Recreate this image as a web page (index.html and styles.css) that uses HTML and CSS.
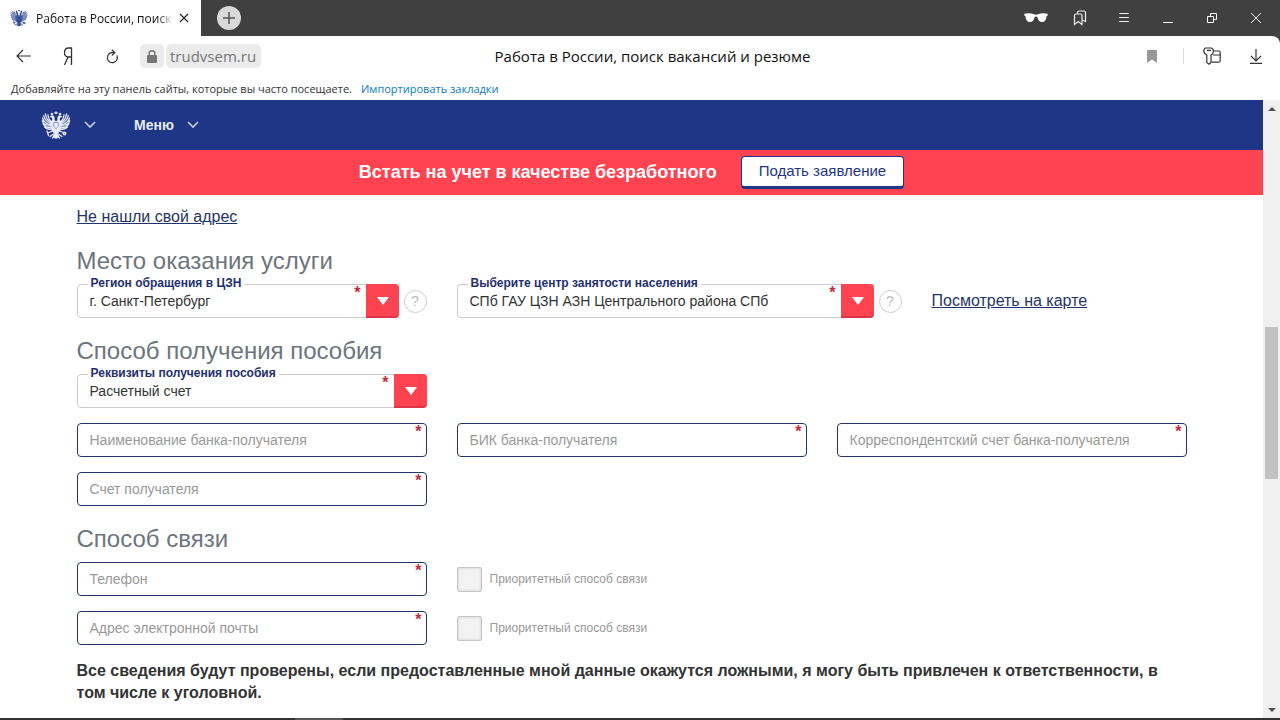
FILE: index.html
```html
<!DOCTYPE html>
<html lang="ru">
<head>
  <meta charset="UTF-8" />
  <meta name="viewport" content="width=device-width, initial-scale=1" />
  <title>Работа в России, поиск вакансий и резюме</title>
  <link rel="stylesheet" href="styles.css">
</head>
<body>
  <!-- Eagle emblem, used in the tab and in the site header -->
  <svg class="sprite" aria-hidden="true">
    <symbol id="eagle" viewBox="0 0 30 30">
      <g fill="currentColor">
        <path d="M15 1l.7.9.9.2-.4 1.600h-2.400l-.4-1.600.9-.2z"/>
        <path d="M9.600 3.600l1.400-.9 1.400.9-.3 1.400H9.900zM17.600 3.600l1.400-.9 1.400.9-.3 1.400h-2.200z"/>
        <path d="M8.500 7l1.700-1.600 2.200.2 1.200 1.600v3l1.400 1 1.400-1v-3l1.200-1.600 2.200-.2L21.500 7l-2.200.5-.6 1.700.8 2.200v9l-2.300 2.600L15 24.500l-2.200-1.500-2.300-2.600v-9l.8-2.200-.6-1.700z"/>
        <path d="M14 22h2l2.200 4.800L15 29l-3.200-2.200z"/>
      </g>
      <g fill="none" stroke="currentColor" stroke-width="1.300" stroke-linecap="round">
        <path d="M10.600 11.500Q7.500 10 7 5M10.500 12.500Q5.500 11 4.500 4M10.500 13.500Q4 12 2.800 5.500M10.500 14.800Q3 14 1.500 8M10.500 16.200Q3 16 1.300 10.800M10.500 17.600Q4.500 18.200 2 13.800M10.500 19Q6 20 3.500 17"/>
        <path d="M19.400 11.500Q22.500 10 23 5M19.500 12.500Q24.500 11 25.500 4M19.500 13.500Q26 12 27.200 5.500M19.500 14.800Q27 14 28.500 8M19.500 16.200Q27 16 28.700 10.800M19.500 17.600Q25.500 18.200 28 13.800M19.500 19Q24 20 26.500 17"/>
        <path d="M11.500 21l-5 2M6 21l1.500 4.500M18.500 21l5 2M9 26.500l3.500-2.500M21 26.500L17.500 24M11.500 28l1.500-2M18.500 28L17 26"/>
        <circle cx="23.500" cy="23.500" r="1.300"/>
      </g>
      <path class="eagle-shield" d="M12.800 12.500h4.400v4L15 19l-2.200-2.500zM8 13.500l-3-3M9 16.500l-4-1.500M22 13.500l3-3M21 16.500l4-1.500" fill="none" stroke-width=".7"/>
    </symbol>
    <symbol id="chevron" viewBox="0 0 12 8">
      <path d="M1 1l5 5 5-5" fill="none" stroke="currentColor" stroke-width="1.600"/>
    </symbol>
  </svg>

  <div class="titlebar">
    <div class="tab">
      <svg class="tab-icon" width="18" height="18"><use href="#eagle"/></svg>
      <span class="tab-title">Работа в России, поиск</span>
      <button class="tab-close" aria-label="Закрыть вкладку">
        <svg width="10" height="10" viewBox="0 0 10 10"><path d="M1 1l8 8M9 1L1 9" stroke="#222" stroke-width="1.200"/></svg>
      </button>
    </div>
    <button class="new-tab" aria-label="Новая вкладка">
      <svg width="14" height="14" viewBox="0 0 14 14"><path d="M7 1v12M1 7h12" stroke="#555" stroke-width="1.500"/></svg>
    </button>
    <div class="window-buttons">
      <button class="icon-btn" aria-label="Инкогнито">
        <svg width="24" height="10" viewBox="0 0 24 10"><path d="M.3.800Q6-.3 10 1.300q2 .7 4 0Q18-.3 23.700.8v1.800l-1.200.6q-.3 5.800-4.500 5.800-3.700 0-4.600-5-1.400-1-2.800 0-.9 5-4.600 5-4.200 0-4.500-5.800L.3 2.600z" fill="#fff"/></svg>
      </button>
      <button class="icon-btn" aria-label="Закладки">
        <svg width="14" height="16" viewBox="0 0 14 16" fill="none" stroke="#eee" stroke-width="1.200"><path d="M1.500 14.500V5.500q0-1.500 1.500-1.500h4.500q1.500 0 1.500 1.500v9l-3.800-3z"/><path d="M4.500 3.500V2.500q0-1.500 1.500-1.500h5q1.500 0 1.500 1.500v9l-3-1.500"/></svg>
      </button>
      <button class="icon-btn" aria-label="Меню браузера">
        <svg width="10" height="10" viewBox="0 0 10 10"><path d="M0 .5h10M0 4.500h10M0 8.500h10" stroke="#eee"/></svg>
      </button>
      <button class="icon-btn" aria-label="Свернуть">
        <svg width="10" height="10" viewBox="0 0 10 10"><path d="M0 9.500h10" stroke="#fff"/></svg>
      </button>
      <button class="icon-btn" aria-label="Свернуть в окно">
        <svg width="10" height="10" viewBox="0 0 10 10" fill="none" stroke="#fff"><path d="M.5 3.500h6v6h-6z"/><path d="M3.500 3.500v-3h6v6h-3"/></svg>
      </button>
      <button class="icon-btn" aria-label="Закрыть">
        <svg width="10" height="10" viewBox="0 0 10 10"><path d="M0 0l10 10M10 0L0 10" stroke="#fff"/></svg>
      </button>
    </div>
  </div>

  <div class="browser-bars">
    <div class="toolbar">
      <button class="icon-btn" aria-label="Назад">
        <svg width="16" height="14" viewBox="0 0 16 14" fill="none" stroke="#333" stroke-width="1.200"><path d="M15 7H1.500M7 1L1 7l6 6"/></svg>
      </button>
      <button class="icon-btn" aria-label="Яндекс">
        <svg width="10" height="18" viewBox="0 0 10 18" fill="none" stroke="#333" stroke-width="1.300"><path d="M8.500 18V1H5.500Q1.500 1 1.500 5.500T5.500 10h3M5 10L1.500 18"/></svg>
      </button>
      <button class="icon-btn" aria-label="Обновить">
        <svg width="14" height="15" viewBox="0 0 14 15" fill="none" stroke="#333" stroke-width="1.200"><path d="M11.800 6.500A5 5 0 1 1 7 3.700H9.800M6.800.8L9.800 3.700 6.800 6.700"/></svg>
      </button>
      <div class="address">
        <span class="lock">
          <svg width="10" height="13" viewBox="0 0 10 13"><rect y="5" width="10" height="8" rx="1" fill="#777"/><path d="M2.200 6V3.500a2.800 2.800 0 0 1 5.600 0V6" fill="none" stroke="#777" stroke-width="1.400"/></svg>
        </span>
        <span class="domain">trudvsem.ru</span>
      </div>
      <div class="page-title">Работа в России, поиск вакансий и резюме</div>
      <button class="icon-btn" aria-label="Добавить в закладки">
        <svg width="10" height="13" viewBox="0 0 10 13"><path d="M0 0h10v13L5 9.500 0 13z" fill="#999"/></svg>
      </button>
      <span class="divider"></span>
      <button class="icon-btn" aria-label="Пароли">
        <svg width="18" height="18" viewBox="0 0 18 18" fill="none" stroke="#333" stroke-width="1.200"><path d="M2.500 1h6q2 1 2 3.500Q10.200 7 8 8v7.500L6 17.200 3.800 15.500V8Q1 7 .8 4 .8 1.800 2.500 1zM4 3.300h4"/><path d="M10.500 4h5q1.700 0 1.700 1.700v8q0 1.500-1.700 1.500H8.500M10 8h7"/></svg>
      </button>
      <button class="icon-btn" aria-label="Загрузки">
        <svg width="12" height="15" viewBox="0 0 12 15" fill="none" stroke="#333" stroke-width="1.200"><path d="M6 0v12M1 7l5 5 5-5M0 14.400h12"/></svg>
      </button>
    </div>
    <div class="bookmarks">
      <span>Добавляйте на эту панель сайты, которые вы часто посещаете.</span>
      <a href="#">Импортировать закладки</a>
    </div>
  </div>

  <div class="viewport">
    <div class="site">
      <header class="site-header">
        <button class="header-btn" aria-label="Портал">
          <svg width="30" height="30"><use href="#eagle"/></svg>
          <svg class="chevron" width="12" height="8"><use href="#chevron"/></svg>
        </button>
        <button class="header-btn">
          Меню
          <svg class="chevron" width="12" height="8"><use href="#chevron"/></svg>
        </button>
      </header>

      <div class="banner">
        <strong>Встать на учет в качестве безработного</strong>
        <button class="banner-btn">Подать заявление</button>
      </div>

      <form class="form">
        <a class="link top-link" href="#">Не нашли свой адрес</a>

        <h2>Место оказания услуги</h2>
        <div class="row">
          <div class="col-4 with-help">
            <div class="field select">
              <label for="region">Регион обращения в ЦЗН</label>
              <select id="region"><option>г. Санкт-Петербург</option></select>
              <span class="required">*</span>
            </div>
            <button type="button" class="help" aria-label="Подсказка">?</button>
          </div>
          <div class="col-5 with-help">
            <div class="field select">
              <label for="center">Выберите центр занятости населения</label>
              <select id="center"><option>СПб ГАУ ЦЗН АЗН Центрального района СПб</option></select>
              <span class="required">*</span>
            </div>
            <button type="button" class="help" aria-label="Подсказка">?</button>
          </div>
          <div class="col-3">
            <a class="link" href="#">Посмотреть на карте</a>
          </div>
        </div>

        <h2>Способ получения пособия</h2>
        <div class="row">
          <div class="col-4 field select">
            <label for="payment">Реквизиты получения пособия</label>
            <select id="payment"><option>Расчетный счет</option></select>
            <span class="required">*</span>
          </div>
        </div>
        <div class="row">
          <div class="col-4 field">
            <input type="text" aria-label="Наименование банка-получателя" placeholder="Наименование банка-получателя">
            <span class="required">*</span>
          </div>
          <div class="col-4 field">
            <input type="text" aria-label="БИК банка-получателя" placeholder="БИК банка-получателя">
            <span class="required">*</span>
          </div>
          <div class="col-4 field">
            <input type="text" aria-label="Корреспондентский счет банка-получателя" placeholder="Корреспондентский счет банка-получателя">
            <span class="required">*</span>
          </div>
        </div>
        <div class="row">
          <div class="col-4 field">
            <input type="text" aria-label="Счет получателя" placeholder="Счет получателя">
            <span class="required">*</span>
          </div>
        </div>

        <h2>Способ связи</h2>
        <div class="row">
          <div class="col-4 field">
            <input type="tel" aria-label="Телефон" placeholder="Телефон">
            <span class="required">*</span>
          </div>
          <label class="col-4 check">
            <input type="checkbox">
            Приоритетный способ связи
          </label>
        </div>
        <div class="row">
          <div class="col-4 field">
            <input type="email" aria-label="Адрес электронной почты" placeholder="Адрес электронной почты">
            <span class="required">*</span>
          </div>
          <label class="col-4 check">
            <input type="checkbox">
            Приоритетный способ связи
          </label>
        </div>

        <p class="notice">Все сведения будут проверены, если предоставленные мной данные окажутся ложными, я могу быть привлечен к ответственности, в том числе к уголовной.</p>
      </form>
    </div>

    <div class="scrollbar">
      <button class="scroll-arrow up" aria-label="Вверх"></button>
      <div class="track"><div class="thumb"></div></div>
      <button class="scroll-arrow down" aria-label="Вниз"></button>
    </div>
  </div>

  <div class="taskbar"><span></span></div>
</body>
</html>
```
FILE: styles.css
```css
*,
*::before,
*::after {
  box-sizing: border-box;
}

body {
  margin: 0;
  min-height: 100vh;
  display: flex;
  flex-direction: column;
  background: #fff;
  color: #333;
  font-family: "Liberation Sans", Arial, sans-serif;
  font-size: 16px;
}

button {
  margin: 0;
  padding: 0;
  border: none;
  background: none;
  font: inherit;
  cursor: pointer;
}

svg {
  display: block;
  flex: none;
}

.sprite {
  position: absolute;
  width: 0;
  height: 0;
}

/* Browser window */
.titlebar {
  display: flex;
  align-items: center;
  height: 36px;
  background: #404040;
}

.tab,
.toolbar,
.bookmarks {
  font-family: "Open Sans", "Noto Sans", sans-serif;
}

.tab {
  display: flex;
  align-items: center;
  width: 201px;
  height: 36px;
  padding: 0 12px 0 10px;
  background: #fff;
  color: #111;
  font-size: 12px;
}

.tab-icon {
  margin-right: 8px;
  color: #2c468f;
}

.tab-title {
  flex: 1;
  white-space: nowrap;
  mask-image: linear-gradient(to right, #000 88%, transparent);
}

.tab-close {
  margin-left: 5px;
}

.new-tab {
  display: flex;
  align-items: center;
  justify-content: center;
  width: 24px;
  height: 24px;
  margin-left: 16px;
  border-radius: 50%;
  background: #d9d9d9;
}

.window-buttons {
  display: flex;
  margin-left: auto;
  padding-right: 2px;
}

.icon-btn {
  display: flex;
  align-items: center;
  justify-content: center;
  width: 44px;
  height: 36px;
}

.browser-bars {
  background: linear-gradient(#404040, #404040) top right / 10px 10px no-repeat;
}

.toolbar {
  display: flex;
  align-items: center;
  height: 40px;
  padding: 0 2px;
  border-top-right-radius: 8px;
  background: #fff;
}

.address {
  display: flex;
  gap: 2px;
  margin-left: 6px;
}

.lock,
.domain {
  display: flex;
  align-items: center;
  justify-content: center;
  height: 24px;
  border-radius: 5px;
  background: #ebebeb;
}

.lock {
  width: 24px;
}

.domain {
  padding: 0 5px 0 4px;
  color: #777;
  font-size: 15px;
}

.page-title {
  flex: 1;
  margin-right: 86px;
  color: #111;
  font-size: 15px;
  text-align: center;
}

.divider {
  width: 1px;
  height: 16px;
  margin: 0 6px 0 9px;
  background: #ddd;
}

.bookmarks {
  display: flex;
  gap: 9px;
  padding: 2px 11px 0;
  line-height: 22px;
  font-size: 11px;
}

.bookmarks a {
  color: #0b7bc1;
  text-decoration: none;
}

.viewport {
  flex: 1;
  display: flex;
}

.site {
  flex: 1;
}

/* Site header */
.site-header {
  display: flex;
  align-items: center;
  gap: 38px;
  height: 50px;
  padding: 0 41px;
  background: #1f3585;
}

.header-btn {
  display: flex;
  align-items: center;
  gap: 13px;
  color: #e8edfb;
  font-size: 14px;
  font-weight: bold;
}

.chevron {
  color: #c3cfee;
}

.eagle-shield {
  stroke: #6f83c4;
}

.banner {
  display: flex;
  align-items: center;
  justify-content: center;
  gap: 24px;
  height: 45px;
  background: #ff4351;
  color: #fff;
  font-size: 18px;
}

.banner-btn {
  height: 33px;
  padding: 0 17px 2px;
  border: 1px solid #1f3585;
  border-bottom-width: 3px;
  border-radius: 4px;
  background: #fff;
  color: #1f3585;
  font-size: 15px;
}

/* Form */
.form {
  max-width: 1140px;
  margin: 0 auto;
  padding: 11px 15px 14px;
}

.link {
  color: #1f3566;
  line-height: 22px;
}

.top-link {
  display: table;
}

h2 {
  margin: 20px 0 10px;
  color: #6c757d;
  font-size: 24px;
  font-weight: normal;
  line-height: 26px;
}

.row {
  display: grid;
  grid-template-columns: repeat(12, 1fr);
  align-items: center;
  column-gap: 30px;
}

.row + .row {
  margin-top: 15px;
}

.col-3 {
  grid-column: span 3;
}

.col-4 {
  grid-column: span 4;
}

.col-5 {
  grid-column: span 5;
}

.with-help {
  display: flex;
  align-items: center;
  gap: 5px;
}

.with-help .field {
  flex: 1;
}

.field {
  position: relative;
}

.field input,
.field select {
  display: block;
  width: 100%;
  height: 34px;
  padding: 0 12px;
  border: 1px solid #1f3566;
  border-radius: 4px;
  background: #fff;
  color: #333;
  font: 14px "Liberation Sans", Arial, sans-serif;
}

.field select {
  appearance: none;
  border-color: #ccc;
}

.field input::placeholder {
  color: #999;
}

.field label {
  position: absolute;
  top: -8px;
  left: 11px;
  padding: 0 3px;
  background: #fff;
  color: #1f3070;
  font-size: 12px;
  font-weight: bold;
  line-height: 14px;
}

/* Red drop-down button */
.select::before {
  content: "";
  position: absolute;
  top: 0;
  right: 0;
  width: 33px;
  height: 34px;
  border-bottom: 2px solid #dc3545;
  border-radius: 0 4px 4px 0;
  background: #ff4351;
  pointer-events: none;
}

.select::after {
  content: "";
  position: absolute;
  top: 13px;
  right: 10px;
  border: 6px solid transparent;
  border-top: 8px solid #fff;
  border-bottom: none;
  pointer-events: none;
}

.required {
  position: absolute;
  top: 2px;
  right: 5px;
  color: #c02c3c;
  font-size: 16px;
  font-weight: bold;
  line-height: 14px;
}

.select .required {
  right: 38px;
}

.help {
  width: 23px;
  height: 23px;
  border: 1px solid #ccc;
  border-radius: 50%;
  color: #bbb;
  font-size: 14px;
}

.check {
  display: flex;
  align-items: center;
  gap: 8px;
  color: #999;
  font-size: 12px;
}

.check input {
  appearance: none;
  width: 25px;
  height: 25px;
  margin: 0;
  border: 1px solid #c4c4c4;
  border-radius: 2px;
  background: #f3f3f3;
  box-shadow: inset 0 0 3px #ccc;
}

.notice {
  margin: 15px 0 0;
  font-weight: bold;
  line-height: 22px;
}

/* Scrollbar and the edge of the taskbar */
.scrollbar {
  display: flex;
  flex-direction: column;
  width: 17px;
  background: #f0f0f0;
}

.scroll-arrow {
  display: flex;
  align-items: center;
  justify-content: center;
  height: 17px;
}

.scroll-arrow::before {
  content: "";
  border: 4px solid transparent;
}

.up::before {
  border-top: none;
  border-bottom-color: #505050;
}

.down::before {
  border-bottom: none;
  border-top-color: #505050;
}

.track {
  flex: 1;
  display: grid;
  grid-template-rows: 210fr 152fr 222fr;
  padding: 0 2px;
}

.thumb {
  grid-row: 2;
  background: #c1c1c1;
}

.taskbar {
  height: 2px;
  padding-left: 295px;
  background: #333;
}

.taskbar span {
  display: block;
  width: 48px;
  height: 2px;
  background: #555;
}
```
